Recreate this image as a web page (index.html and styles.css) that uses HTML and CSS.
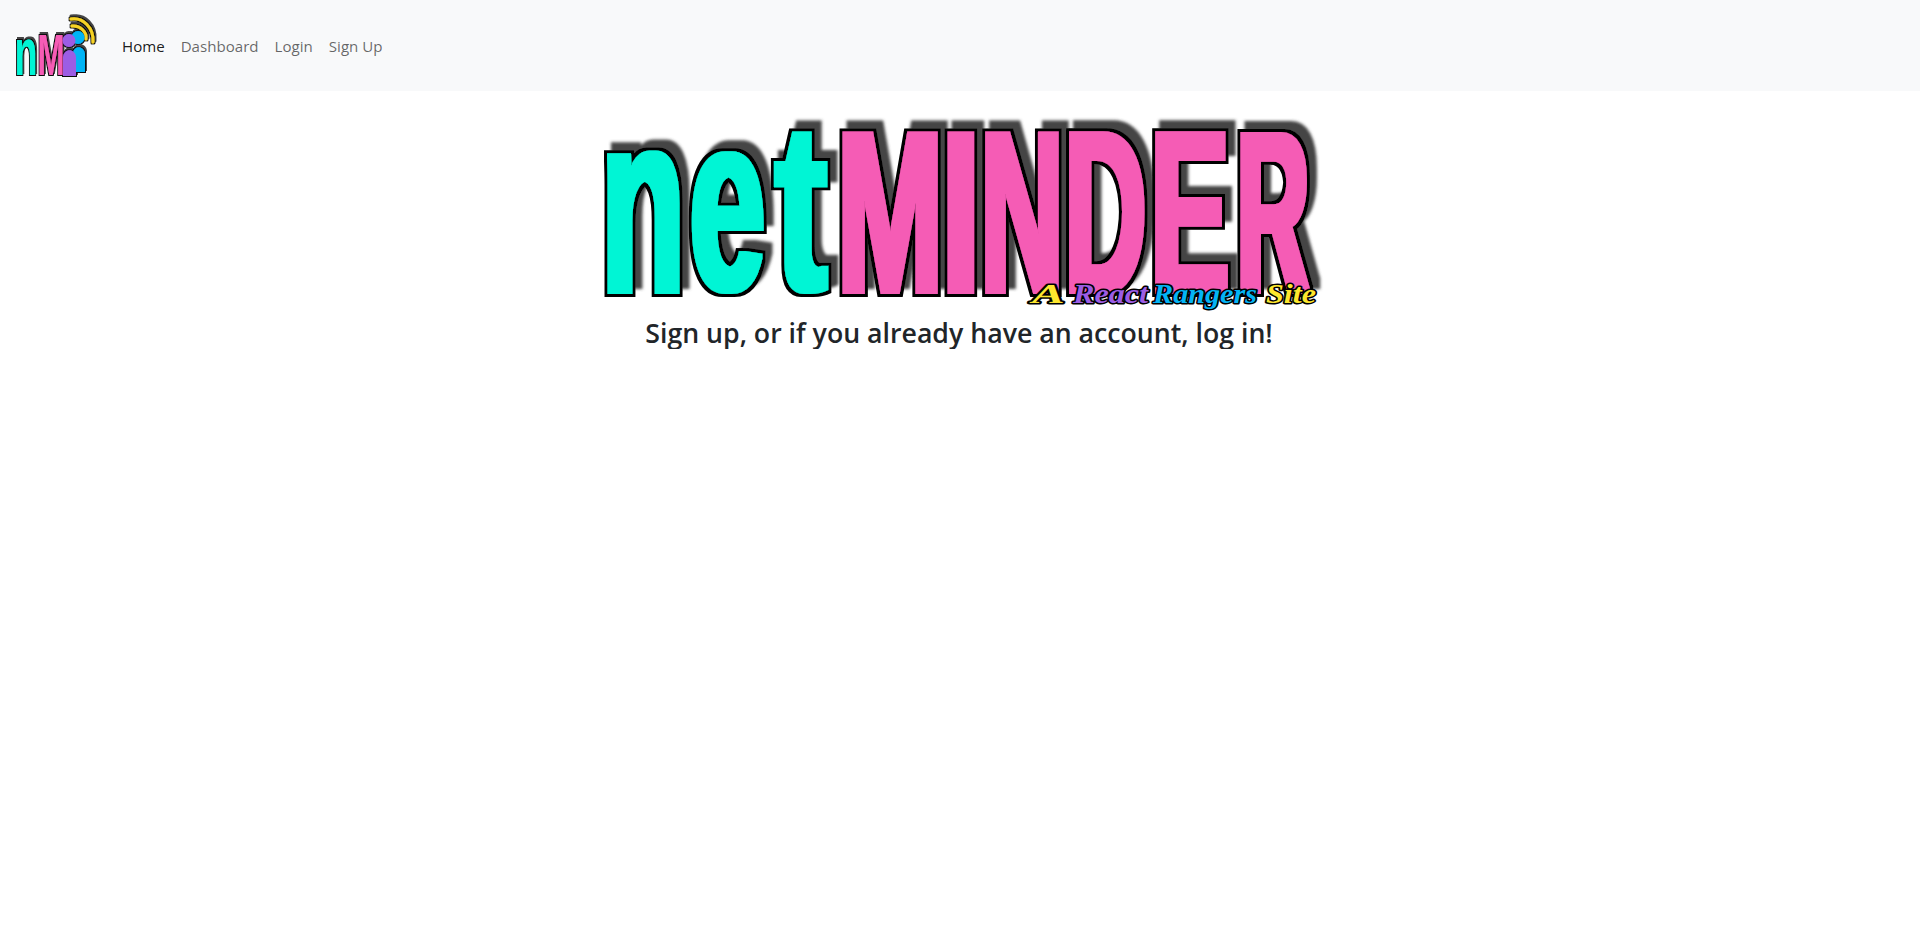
FILE: index.html
```html
<!DOCTYPE html>
<html lang="en">
<head>
  <meta charset="UTF-8">
  <meta name="viewport" content="width=device-width, initial-scale=1.0">
  <title>netMINDER</title>
  <link rel="stylesheet" href="styles.css">
</head>
<body>
  <header class="navbar">
    <a href="#" class="brand" aria-label="netMINDER home">
      <svg class="brand-logo" viewBox="0 0 90 70" aria-hidden="true">
        <defs>
          <filter id="brand-edge" filterUnits="userSpaceOnUse" x="-5" y="-5" width="100" height="80">
            <feMorphology in="SourceAlpha" operator="dilate" radius="1" result="edge"/>
            <feOffset in="edge" dx="1" dy="-2" result="moved"/>
            <feGaussianBlur in="moved" stdDeviation="0.6" result="soft"/>
            <feFlood flood-color="#444"/>
            <feComposite in2="soft" operator="in" result="shadow"/>
            <feFlood flood-color="#111"/>
            <feComposite in2="edge" operator="in" result="line"/>
            <feMerge>
              <feMergeNode in="shadow"/>
              <feMergeNode in="line"/>
              <feMergeNode in="SourceGraphic"/>
            </feMerge>
          </filter>
        </defs>
        <g class="brand-art">
          <!-- wifi arcs -->
          <path class="arc-fill" d="M59 8 C71 6 82 17 81 31"/>
          <path class="arc-fill" d="M60 15 C68 14 75 21 74 28"/>
          <!-- people -->
          <circle class="person-blue" cx="66" cy="26.5" r="6.5"/>
          <path class="person-blue" d="M61 61 V43 C61 34 72 34 73 43 V61 Z"/>
          <circle class="person-purple" cx="57" cy="29.5" r="6.5"/>
          <path class="person-purple" d="M51 65 V46 C52 37 63 37 64 46 V65 Z"/>
          <text class="brand-name" x="2.5" y="64" textLength="50" lengthAdjust="spacingAndGlyphs"><tspan class="brand-n">n</tspan><tspan class="brand-m">M</tspan></text>
        </g>
      </svg>
    </a>
    <nav class="nav-links">
      <a href="#" class="nav-link active">Home</a>
      <a href="#" class="nav-link">Dashboard</a>
      <a href="#" class="nav-link">Login</a>
      <a href="#" class="nav-link">Sign Up</a>
    </nav>
  </header>

  <main class="home">
    <svg class="wordmark" viewBox="580 95 760 220" role="img" aria-label="netMINDER, A React Rangers Site">
      <defs>
        <filter id="word-edge" filterUnits="userSpaceOnUse" x="580" y="95" width="760" height="220">
          <feMorphology in="SourceGraphic" operator="dilate" radius="3 2" result="fat"/>
          <feMorphology in="fat" operator="dilate" radius="3" result="edge"/>
          <feOffset in="edge" dx="7" dy="-8" result="moved"/>
          <feGaussianBlur in="moved" stdDeviation="1.5" result="soft"/>
          <feFlood flood-color="#444"/>
          <feComposite in2="soft" operator="in" result="shadow"/>
          <feFlood flood-color="#000"/>
          <feComposite in2="edge" operator="in" result="line"/>
          <feMerge>
            <feMergeNode in="shadow"/>
            <feMergeNode in="line"/>
            <feMergeNode in="fat"/>
          </feMerge>
        </filter>
      </defs>
      <g class="word-letters">
        <text class="word-name"><tspan class="lower teal" x="600.9" y="292" textLength="84.2" lengthAdjust="spacingAndGlyphs">n</tspan><tspan class="lower-e teal" x="689.5" y="290" textLength="75.9" lengthAdjust="spacingAndGlyphs">e</tspan><tspan class="tall teal" x="774.9" y="290" textLength="52.2" lengthAdjust="spacingAndGlyphs">t</tspan><tspan class="caps pink" x="837.1" y="292" textLength="106.2" lengthAdjust="spacingAndGlyphs">M</tspan><tspan class="caps pink" x="941" y="292" textLength="39.7" lengthAdjust="spacingAndGlyphs">I</tspan><tspan class="caps pink" x="980.6" y="292" textLength="82.9" lengthAdjust="spacingAndGlyphs">N</tspan><tspan class="caps pink" x="1064.5" y="292" textLength="81.8" lengthAdjust="spacingAndGlyphs">D</tspan><tspan class="caps pink" x="1150.3" y="292" textLength="79.2" lengthAdjust="spacingAndGlyphs">E</tspan><tspan class="caps pink" x="1236.7" y="292" textLength="72.6" lengthAdjust="spacingAndGlyphs">R</tspan></text>
      </g>
      <text class="tagline" y="303"><tspan class="tag-yellow" x="1032" textLength="30" lengthAdjust="spacingAndGlyphs">A</tspan> <tspan class="tag-purple" x="1073" textLength="75" lengthAdjust="spacingAndGlyphs">React</tspan> <tspan class="tag-blue" x="1153" textLength="104" lengthAdjust="spacingAndGlyphs">Rangers</tspan> <tspan class="tag-yellow" x="1266" textLength="50" lengthAdjust="spacingAndGlyphs">Site</tspan></text>
    </svg>
    <h3 class="intro">Sign up, or if you already have an account, log in!</h3>
  </main>
</body>
</html>
```

FILE: styles.css
```css
body {
  margin: 0;
  font-family: 'Open Sans', 'Noto Sans', sans-serif;
  font-size: 16px;
  color: #212529;
  background-color: #fff;
}

/* top bar */
.navbar {
  display: flex;
  align-items: center;
  height: 91px;
  padding: 0 12px;
  background-color: #f8f9fa;
}
.brand {
  display: block;
  margin-right: 12px;
}
.brand-logo {
  display: block;
  width: 90px;
  height: 70px;
  overflow: visible;
}
.brand-art {
  filter: url(#brand-edge);
}
.arc-fill {
  fill: none;
  stroke: #f7d325;
  stroke-width: 3px;
  stroke-linecap: round;
}
.person-blue {
  fill: #04b4f5;
}
.person-purple {
  fill: #9c5de4;
}
.brand-name {
  font-family: 'Liberation Sans', sans-serif;
  font-weight: 700;
}
.brand-n {
  font-size: 67px;
  fill: #04f5d5;
}
.brand-m {
  font-size: 58px;
  fill: #f55bb5;
}

.nav-links {
  display: flex;
}
.nav-link {
  padding: 8px;
  font-size: 15.1px;
  color: rgba(0, 0, 0, 0.6);
  text-decoration: none;
}
.nav-link.active {
  color: rgba(0, 0, 0, 0.9);
}

/* main content */
.home {
  display: flex;
  flex-direction: column;
  align-items: center;
}
.wordmark {
  display: block;
  width: 760px;
  height: 220px;
  margin-top: 4px;
  overflow: visible;
}
.word-letters {
  filter: url(#word-edge);
}
.word-name {
  font-family: 'Liberation Sans', sans-serif;
  font-weight: 700;
}
.lower {
  font-size: 259px;
}
.lower-e {
  font-size: 253px;
}
.caps {
  font-size: 230px;
}
.tall {
  font-size: 240px;
}
.teal {
  fill: #04f5d5;
}
.pink {
  fill: #f55bb5;
}
.tagline {
  font-family: 'Liberation Serif', serif;
  font-size: 27px;
  font-style: italic;
  font-weight: 700;
  stroke: #000;
  stroke-width: 3px;
  paint-order: stroke;
  stroke-linejoin: round;
}
.tag-yellow {
  fill: #fde72e;
}
.tag-purple {
  fill: #9c5de4;
}
.tag-blue {
  fill: #04b4f5;
}
.intro {
  margin: 2px 2px 0 0;
  font-size: 26.7px;
  font-weight: 600;
  line-height: 1.2;
  color: #212529;
}
```
